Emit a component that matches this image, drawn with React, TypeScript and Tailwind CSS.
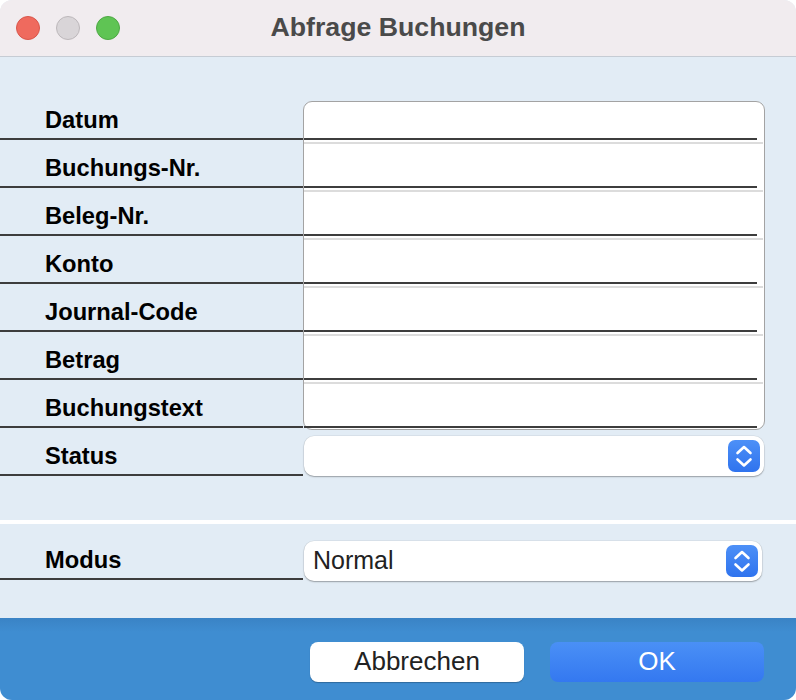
import React from "react";

const textRows = [
  "Datum",
  "Buchungs-Nr.",
  "Beleg-Nr.",
  "Konto",
  "Journal-Code",
  "Betrag",
  "Buchungstext",
];

const Stepper = () => (
  <div className="flex h-[32px] w-[32px] items-center justify-center rounded-[7px] bg-[linear-gradient(#4d90f7,#2f73ee)]">
    <svg width="32" height="32" viewBox="0 0 32 32" fill="none">
      <path
        d="M9.5 13 L16 7 L22.5 13"
        stroke="white"
        strokeWidth="2.6"
        strokeLinecap="round"
        strokeLinejoin="round"
      />
      <path
        d="M9.5 19.5 L16 25.5 L22.5 19.5"
        stroke="white"
        strokeWidth="2.6"
        strokeLinecap="round"
        strokeLinejoin="round"
      />
    </svg>
  </div>
);

const Label = ({ text }: { text: string }) => (
  <div className="flex h-[48px] items-end border-b-2 border-[#3d3d3d] pb-[5px] pl-[45px] text-[23.7px] font-bold leading-none text-black">
    {text}
  </div>
);

export default function App() {
  return (
    <div className="h-[700px] w-[796px] bg-white font-['Liberation_Sans',Arial,sans-serif]">
      <div className="flex h-full w-full flex-col overflow-hidden rounded-[12px] bg-[#e2ecf5]">
        {/* title bar */}
        <div className="relative flex h-[57px] shrink-0 items-center border-b border-[#c6ccd4] bg-[#f1ecef]">
          <div className="flex gap-[16px] pl-[16px]">
            <span className="h-[24px] w-[24px] rounded-full border border-[#d9564b] bg-[#ef6a5e]" />
            <span className="h-[24px] w-[24px] rounded-full border border-[#bdb8bb] bg-[#d9d5d8]" />
            <span className="h-[24px] w-[24px] rounded-full border border-[#4ea844] bg-[#5fc454]" />
          </div>
          <div className="absolute inset-x-0 top-0 flex h-[55px] items-center justify-center text-[26.7px] font-bold text-[#4a4a4a]">
            Abfrage Buchungen
          </div>
        </div>

        {/* fields */}
        <div className="h-[463px] shrink-0 pt-[35px]">
          <div className="flex">
            <div className="flex w-[303px] flex-col">
              {textRows.map((r) => (
                <Label key={r} text={r} />
              ))}
              <div className="pb-[1px]">
                <Label text="Status" />
              </div>
            </div>
            <div className="flex w-[462px] flex-col">
              <div className="mt-[9px] flex flex-col rounded-[9px] border-[1.5px] border-[#a3a3a3] bg-white pb-[1px]">
                {textRows.map((r, i) => (
                  <div key={r} className="flex flex-col">
                    <div className={i === 0 ? "h-[35.5px]" : "h-[42px]"} />
                    <div className="mr-[7.5px] h-[2px] bg-[#3d3d3d]" />
                    {i < textRows.length - 1 && (
                      <div className="mr-[1.5px] mt-[2px] h-[2px] bg-[#dcdcdc]" />
                    )}
                  </div>
                ))}
              </div>
              <div className="ml-[1px] mt-[6px] flex h-[40px] w-[460px] items-center justify-end rounded-[10px] bg-white pr-[4px] shadow-[0_1px_1.5px_rgba(0,0,0,0.3),0_0_0_0.5px_rgba(0,0,0,0.08)]">
                <Stepper />
              </div>
            </div>
          </div>
        </div>

        <div className="h-[4px] shrink-0 bg-white" />

        {/* mode */}
        <div className="h-[94px] shrink-0 pt-[8px]">
          <div className="flex">
            <div className="flex w-[303px] flex-col">
              <div className="flex h-[48px] items-end border-b-2 border-[#3d3d3d] pb-[5px] pl-[45px] text-[23.7px] font-bold leading-none text-black">
                Modus
              </div>
            </div>
            <div className="ml-[1px] mt-[9px] flex h-[40px] w-[458px] items-center justify-between rounded-[10px] bg-white pl-[9px] pr-[4px] shadow-[0_1px_1.5px_rgba(0,0,0,0.3),0_0_0_0.5px_rgba(0,0,0,0.08)]">
              <span className="pb-[1px] text-[25px] leading-none text-[#222]">Normal</span>
              <Stepper />
            </div>
          </div>
        </div>

        {/* footer */}
        <div className="flex flex-1 items-start justify-end gap-[26px] bg-[linear-gradient(#3a83c5,#3f8dd1_14px)] pr-[32px] pt-[24px]">
          <button className="flex h-[40px] w-[214px] items-center justify-center rounded-[8px] bg-white pb-[3px] text-[26px] leading-none text-[#222] shadow-[0_1px_1px_rgba(0,0,0,0.25)]">
            Abbrechen
          </button>
          <button className="flex h-[40px] w-[214px] items-center justify-center rounded-[8px] bg-[linear-gradient(#4a90f6,#3478f0)] pb-[3px] text-[26px] leading-none text-white">
            OK
          </button>
        </div>
      </div>
    </div>
  );
}
